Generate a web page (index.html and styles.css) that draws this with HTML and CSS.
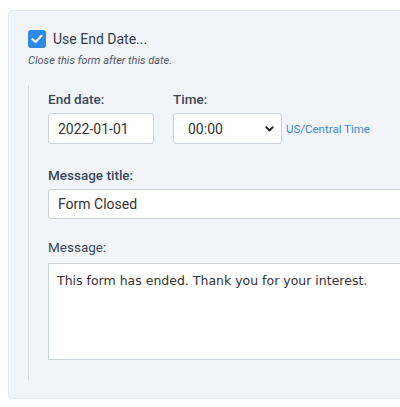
FILE: index.html
```html
<!DOCTYPE html>
<html>
<head>
<meta charset="utf-8">
<link rel="stylesheet" href="styles.css">
</head>
<body>
<div class="panel">
  <div class="check-row">
    <span class="checkbox">
      <svg width="12" height="10" viewBox="0 0 12 10"><path d="M1.5 5.2 L4.5 8 L10.5 1.8" fill="none" stroke="#fff" stroke-width="2.2" stroke-linecap="round" stroke-linejoin="round"/></svg>
    </span>
    <span class="check-label">Use End Date...</span>
  </div>
  <div class="hint">Close this form after this date.</div>
  <div class="sub">
    <div class="row">
      <div class="col">
        <div class="label">End date:</div>
        <div class="input date">2022-01-01</div>
      </div>
      <div class="col">
        <div class="label">Time:</div>
        <div class="time-row">
          <div class="input select">
            <span>00:00</span>
            <svg class="chev" width="9" height="6" viewBox="0 0 9 6"><path d="M1.2 1.2 L4.5 4.5 L7.8 1.2" fill="none" stroke="#222" stroke-width="1.8" stroke-linecap="round" stroke-linejoin="round"/></svg>
          </div>
          <span class="tz">US/Central Time</span>
        </div>
      </div>
    </div>
    <div class="label gap">Message title:</div>
    <div class="input wide">Form Closed</div>
    <div class="label gap2 light">Message:</div>
    <div class="textarea">This form has ended. Thank you for your interest.</div>
  </div>
</div>
</body>
</html>
```

FILE: styles.css
```css
html, body {
  margin: 0;
  padding: 0;
  background: #ffffff;
  overflow: hidden;
  width: 400px;
  height: 407px;
}
body {
  font-family: Roboto, "Liberation Sans", sans-serif;
  padding-top: 10px;
  padding-left: 8px;
  box-sizing: border-box;
}
.panel {
  width: 430px;
  box-sizing: border-box;
  background: #f1f5fa;
  border: 1px solid #e4e9ef;
  border-radius: 4px;
  padding: 19px 0 18px 19px;
}
.check-row {
  display: flex;
  align-items: center;
  height: 18px;
}
.checkbox {
  width: 18px;
  height: 18px;
  border-radius: 3px;
  background: #2f8ae6;
  display: flex;
  align-items: center;
  justify-content: center;
}
.check-label {
  margin-left: 7px;
  font-size: 14px;
  color: #333c48;
  font-weight: 400;
}
.hint {
  margin-top: 6px;
  font-size: 11px;
  line-height: 14px;
  font-style: italic;
  color: #4f5661;
}
.sub {
  margin-top: 17px;
  border-left: 1px solid #d8dee5;
  padding: 6px 0 20px 19px;
}
.row {
  display: flex;
  gap: 19px;
}
.label {
  font-size: 13.5px;
  line-height: 16px;
  font-weight: 500;
  color: #3c4858;
  margin-bottom: 6px;
}
.label.light {
  font-weight: 400;
}
.gap {
  margin-top: 23px;
  margin-bottom: 6px;
}
.gap2 {
  margin-top: 20px;
  margin-bottom: 8px;
}
.input {
  box-sizing: border-box;
  background: #fff;
  border: 1px solid #cdd4dc;
  border-radius: 3px;
  font-size: 14px;
  color: #333;
  display: flex;
  align-items: center;
}
.date {
  width: 106px;
  height: 31px;
  padding-left: 9px;
}
.time-row {
  display: flex;
  align-items: center;
  gap: 4px;
}
.select {
  width: 109px;
  height: 31px;
  padding-left: 14px;
  padding-right: 7px;
  justify-content: space-between;
}
.tz {
  font-size: 11.5px;
  color: #3d8ad0;
}
.wide {
  width: 400px;
  height: 30px;
  padding-left: 9px;
}
.textarea {
  box-sizing: border-box;
  width: 400px;
  height: 97px;
  background: #fff;
  border: 1px solid #cdd4dc;
  padding: 9px 8px;
  font-family: "DejaVu Sans", Verdana, sans-serif;
  font-size: 12.5px;
  line-height: 16px;
  color: #333;
}
```
